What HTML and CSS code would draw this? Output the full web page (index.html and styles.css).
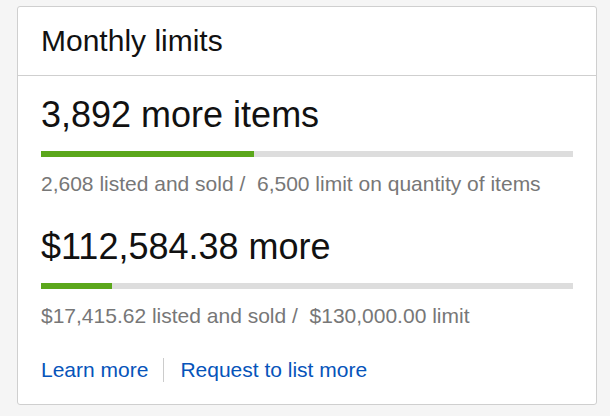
FILE: index.html
```html
<!DOCTYPE html>
<html lang="en">
<head>
<meta charset="utf-8">
<title>Monthly limits</title>
<link rel="stylesheet" href="styles.css">
</head>
<body>
<section class="card">
  <header class="card-header">
    <h2 class="card-title">Monthly limits</h2>
  </header>
  <div class="card-body">
    <div class="limit">
      <div class="limit-value">3,892 more items</div>
      <div class="bar"><div class="bar-fill" style="width: 40.12%"></div></div>
      <div class="limit-detail">2,608 listed and sold /&nbsp; 6,500 limit on quantity of items</div>
    </div>
    <div class="limit">
      <div class="limit-value">$112,584.38 more</div>
      <div class="bar"><div class="bar-fill" style="width: 13.4%"></div></div>
      <div class="limit-detail">$17,415.62 listed and sold /&nbsp; $130,000.00 limit</div>
    </div>
    <nav class="links">
      <a class="link" href="#">Learn more</a>
      <a class="link link-sep" href="#">Request to list more</a>
    </nav>
  </div>
</section>
</body>
</html>
```

FILE: styles.css
```css
html {
  background: #f5f5f5;
}
body {
  margin: 0;
  padding: 6px 13px 0 17px;
  font-family: "Liberation Sans", Arial, sans-serif;
  color: #111;
}
.card {
  width: 578px;
  background: #fff;
  border: 1px solid #cfcfcf;
  border-radius: 3px;
}
.card-header {
  height: 68px;
  padding: 0 23px;
  display: flex;
  align-items: center;
  border-bottom: 1px solid #cfcfcf;
}
.card-title {
  margin: 0;
  font-size: 30px;
  font-weight: normal;
  line-height: 36px;
  color: #111;
}
.card-body {
  padding: 18px 23px 22px;
}
.limit + .limit {
  margin-top: 30px;
}
.limit-value {
  font-size: 36px;
  line-height: 41px;
  color: #111;
}
.bar {
  height: 6px;
  margin: 16px 0 15px;
  background: #dddddd;
}
.bar-fill {
  height: 100%;
  background: #5ba71b;
}
.limit-detail {
  font-size: 21px;
  line-height: 24px;
  color: #777;
}
.links {
  margin-top: 30px;
  display: flex;
  font-size: 21px;
  line-height: 24px;
}
.link {
  color: #0654ba;
  text-decoration: none;
  padding-right: 15px;
}
.link-sep {
  border-left: 1px solid #cccccc;
  padding-left: 16px;
}
```
